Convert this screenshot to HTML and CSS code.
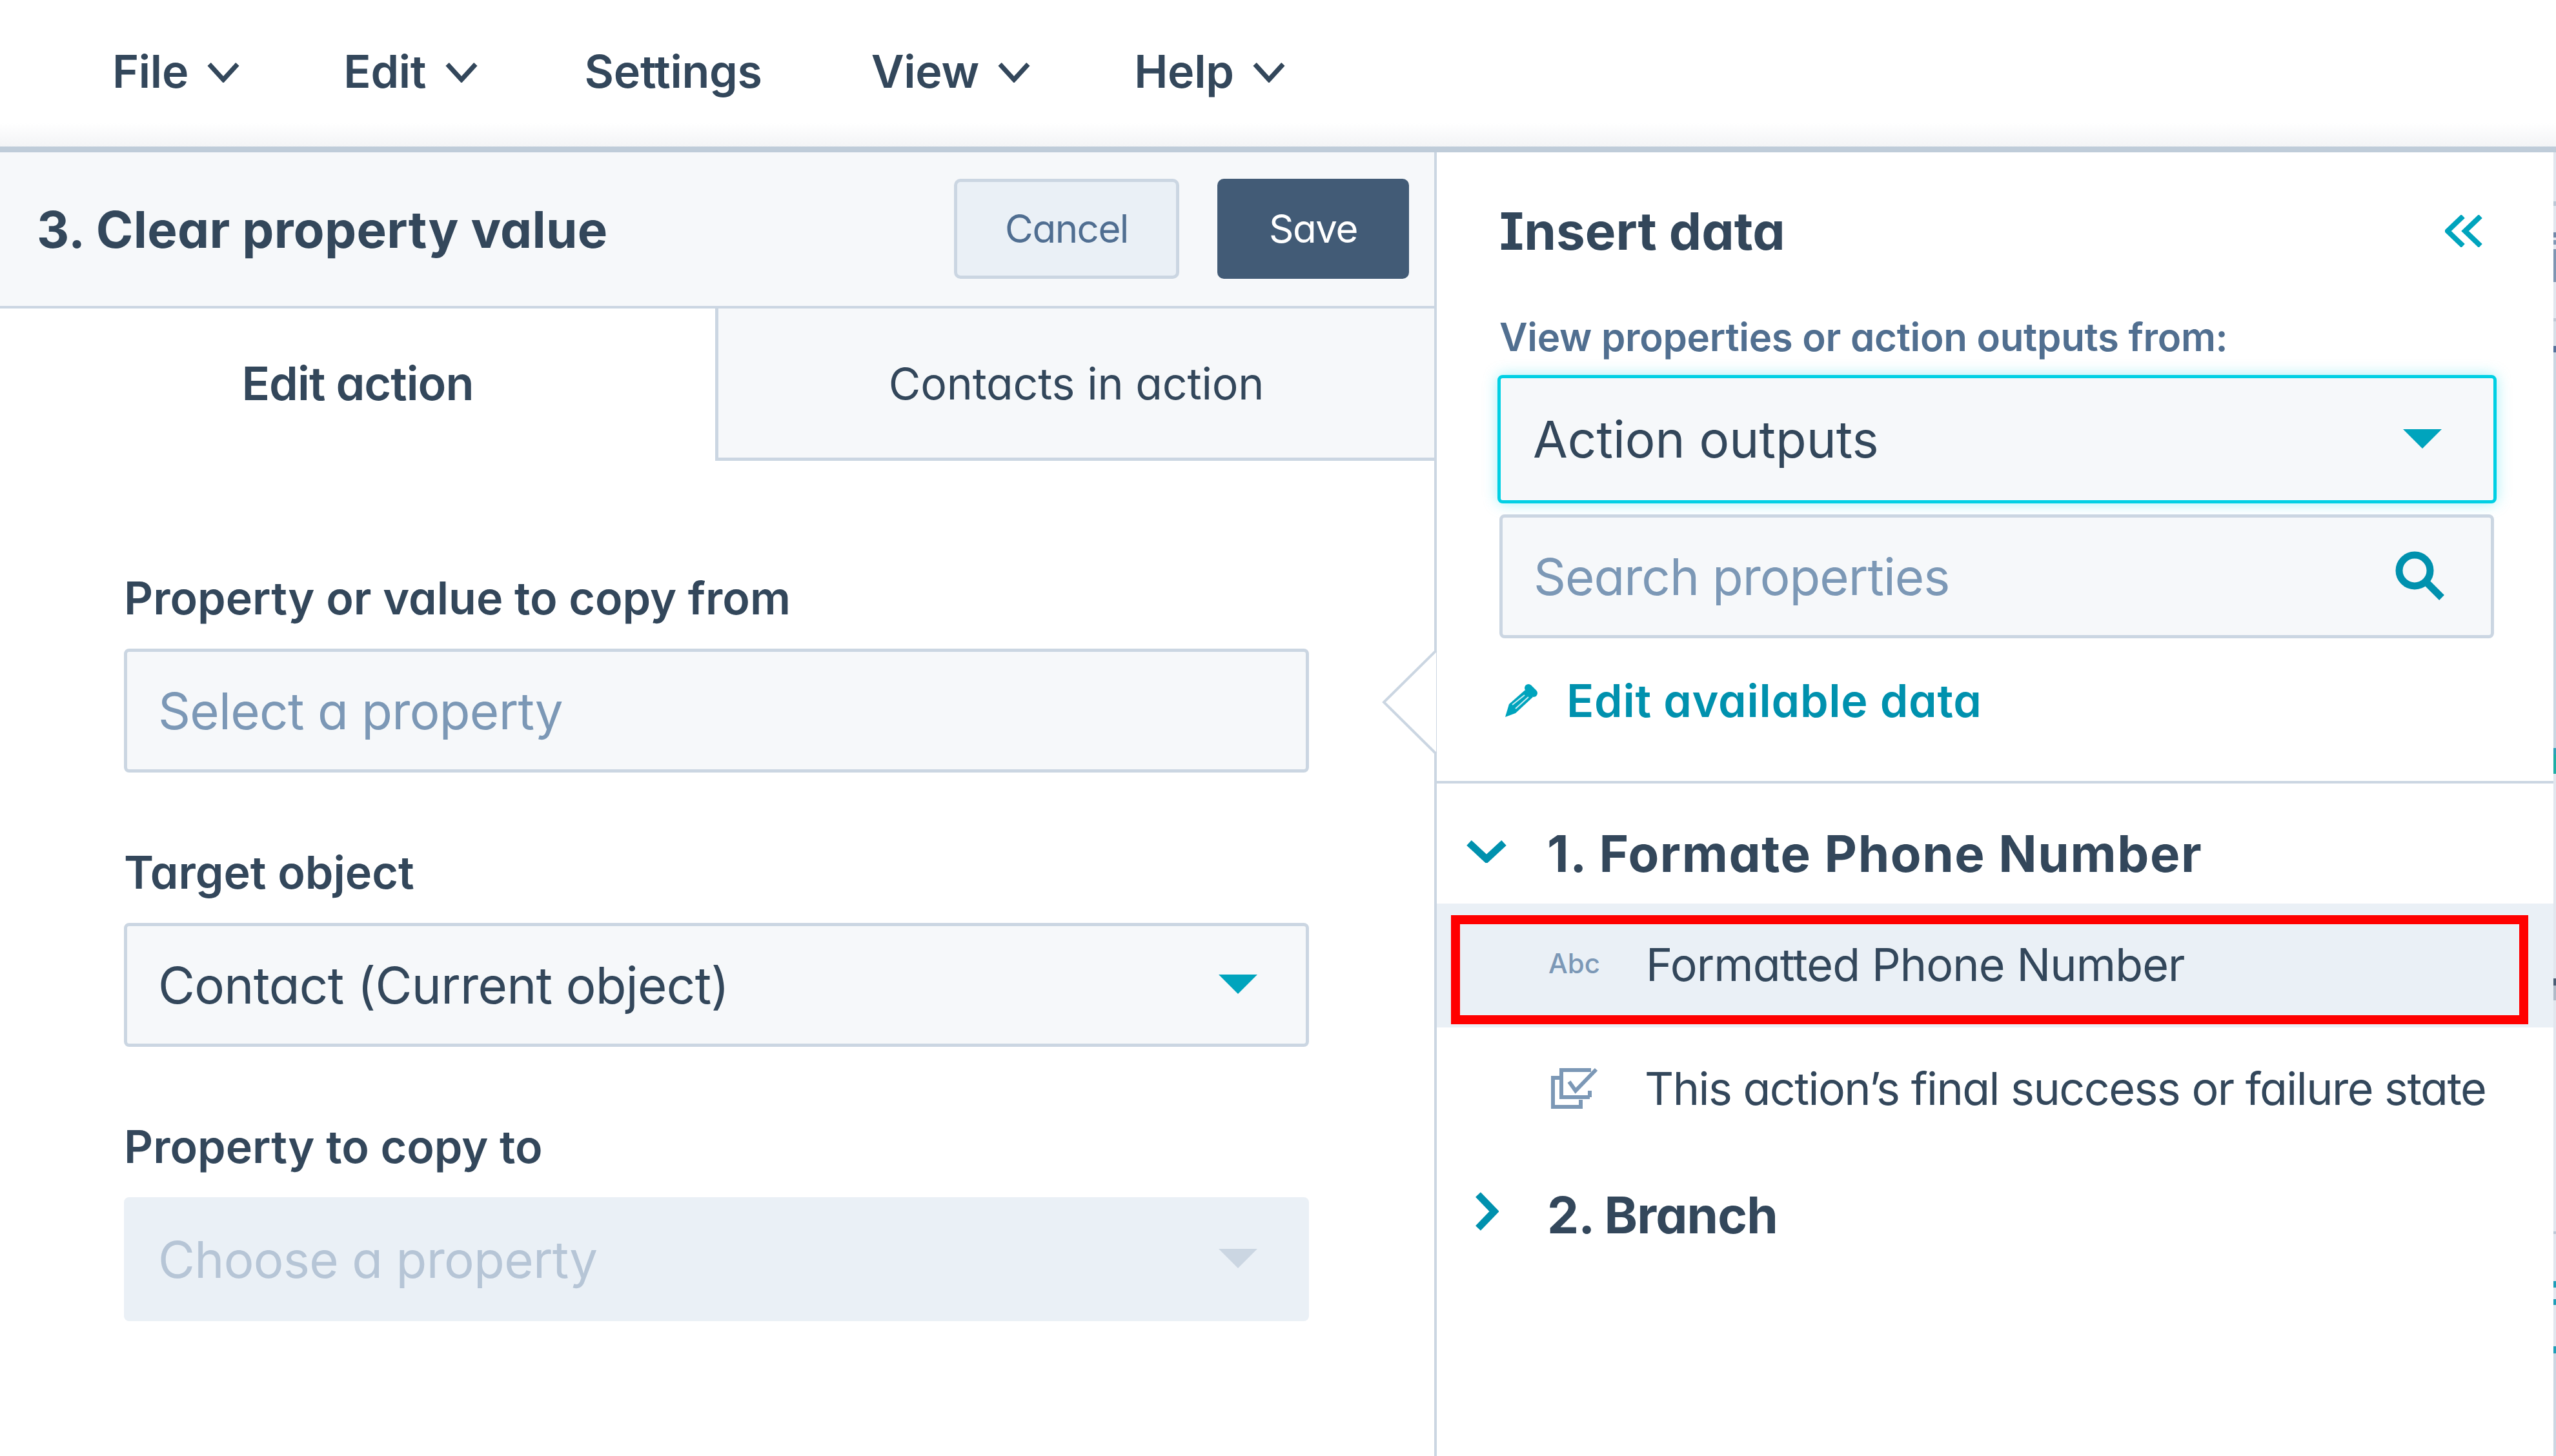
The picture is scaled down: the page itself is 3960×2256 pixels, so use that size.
FILE: index.html
```html
<!DOCTYPE html>
<html lang="en">
<head>
    <meta charset="UTF-8">
    <title>Clear property value</title>
    <link rel="stylesheet" href="styles.css">
</head>
<body>
    <nav class="menubar">
        <span class="menu-item">File <svg class="menu-caret" viewBox="0 0 48 30"><path d="M3 3 L24 26 L45 3"/></svg></span>
        <span class="menu-item">Edit <svg class="menu-caret" viewBox="0 0 48 30"><path d="M3 3 L24 26 L45 3"/></svg></span>
        <span class="menu-item menu-plain">Settings</span>
        <span class="menu-item">View <svg class="menu-caret" viewBox="0 0 48 30"><path d="M3 3 L24 26 L45 3"/></svg></span>
        <span class="menu-item">Help <svg class="menu-caret" viewBox="0 0 48 30"><path d="M3 3 L24 26 L45 3"/></svg></span>
    </nav>

    <main class="main">
        <section class="left">
            <header class="left-head">
                <h1 class="title">3. Clear property value</h1>
                <button class="btn btn-cancel">Cancel</button>
                <button class="btn btn-save">Save</button>
            </header>
            <div class="tabs">
                <div class="tab tab-active">Edit action</div>
                <div class="tab">Contacts in action</div>
            </div>
            <form class="form">
                <label class="field-label">Property or value to copy from</label>
                <div class="field"><span class="placeholder">Select a property</span></div>
                <label class="field-label">Target object</label>
                <div class="field"><span>Contact (Current object)</span><i class="arrow"></i></div>
                <label class="field-label">Property to copy to</label>
                <div class="field field-disabled"><span>Choose a property</span><i class="arrow"></i></div>
            </form>
        </section>

        <aside class="right">
            <svg class="notch" viewBox="0 0 84 164"><path d="M84 2 L3 82 L84 162"/></svg>
            <div class="insert">
                <div class="insert-head">
                    <h2 class="insert-title">Insert data</h2>
                    <svg class="collapse" viewBox="0 0 58 50"><path d="M28 2 L4 25 L28 48 M55 2 L31 25 L55 48"/></svg>
                </div>
                <div class="insert-label">View properties or action outputs from:</div>
                <div class="field field-focus"><span>Action outputs</span><i class="arrow"></i></div>
                <div class="field field-search">
                    <span class="placeholder">Search properties</span>
                    <svg class="search-icon" viewBox="0 0 78 78"><circle cx="30" cy="30" r="24"/><path d="M48 48 L72 72"/></svg>
                </div>
                <a class="edit-link">
                    <svg class="pencil" viewBox="0 0 54 52">
                        <path class="pencil-cap" d="M38 6 L46 14"/>
                        <path d="M33 9 L45 20 L18 45 L2 51 L8 31 Z"/>
                        <path class="pencil-line" d="M13 32 L32 17 M18 38 L38 20"/>
                    </svg>
                    Edit available data
                </a>
            </div>

            <div class="outputs">
                <div class="group group-first">
                    <svg class="chevron chevron-down" viewBox="0 0 64 36"><path d="M5 5 L32 30 L59 5"/></svg>
                    1. Formate Phone Number
                </div>
                <div class="row row-hover">
                    <span class="row-abc">Abc</span>
                    <span>Formatted Phone Number</span>
                    <div class="redbox"></div>
                </div>
                <div class="row row-state">
                    <svg class="row-check" viewBox="0 0 74 64">
                        <path d="M62 4 L16 4 L16 46 L60 46 M60 36 L60 46"/>
                        <path d="M16 16 L3 16 L3 61 L46 61 L46 50"/>
                        <path d="M28 22 L38 36 L70 3"/>
                    </svg>
                    <span>This action’s final success or failure state</span>
                </div>
                <div class="group group-last">
                    <svg class="chevron chevron-right" viewBox="0 0 38 62"><path d="M6 5 L31 31 L6 57"/></svg>
                    2. Branch
                </div>
            </div>
        </aside>
        <div class="edge"></div>
    </main>
</body>
</html>
```
FILE: styles.css
```css
* {
  box-sizing: border-box;
}

html, body {
  margin: 0;
  width: 3960px;
  height: 2256px;
  overflow: hidden;
}

body {
  background: white;
  color: #33475b;
  font-family: Inter, "Noto Sans", sans-serif;
  font-feature-settings: "cv11";
}

/* top menu */
.menubar {
  height: 236px;
  display: flex;
  align-items: flex-start;
  padding: 72px 0 0 174px;
  gap: 161px;
  border-bottom: 9px solid #bfccd9;
  background: linear-gradient(to bottom, white 190px, #f3f4f6 227px);
}

.menu-item {
  font-size: 70px;
  font-weight: 600;
  letter-spacing: -0.3px;
  line-height: 78px;
  white-space: nowrap;
}

.menu-plain {
  margin: 0 8px 0 5px;
}

.menu-caret {
  width: 50px;
  height: 32px;
  margin-left: 12px;
  vertical-align: 8px;
}

.menu-caret path {
  fill: none;
  stroke: #33475b;
  stroke-width: 7;
}

.main {
  display: flex;
  height: 2020px;
  position: relative;
}

/* left side */
.left {
  width: 2226px;
  border-right: 4px solid #cbd6e2;
}

.left-head {
  height: 242px;
  background: #f6f8fa;
  border-bottom: 4px solid #cbd6e2;
  display: flex;
  align-items: center;
  padding: 0 39px 0 57px;
}

.title {
  margin: 0 auto 0 0;
  font-size: 78px;
  font-weight: 700;
  letter-spacing: 0.3px;
}

.btn {
  height: 155px;
  border-radius: 10px;
  font-family: inherit;
  font-feature-settings: inherit;
  font-size: 60px;
  font-weight: 400;
  letter-spacing: -1.5px;
  margin-top: -2px;
}

.btn-cancel {
  width: 349px;
  margin-right: 59px;
  background: #eaf0f6;
  border: 5px solid #cbd6e2;
  color: #506e91;
}

.btn-save {
  width: 297px;
  background: #425b76;
  border: none;
  color: white;
}

.tabs {
  display: flex;
  height: 236px;
}

.tab {
  flex: 1;
  display: flex;
  align-items: center;
  justify-content: center;
  background: #f6f8fa;
  border-bottom: 5px solid #cbd6e2;
  font-size: 68px;
  letter-spacing: -0.2px;
}

.tab-active {
  flex: none;
  width: 1113px;
  background: white;
  border-bottom: none;
  border-right: 5px solid #cbd6e2;
  padding-bottom: 6px;
  font-size: 72px;
  font-weight: 600;
  letter-spacing: -1px;
}

.form {
  padding: 168px 194px 0 192px;
}

.field-label {
  display: block;
  font-size: 70px;
  font-weight: 600;
  line-height: 90px;
  margin-bottom: 33px;
}

.field {
  height: 192px;
  background: #f6f8fa;
  border: 5px solid #cbd6e2;
  border-radius: 8px;
  display: flex;
  align-items: center;
  justify-content: space-between;
  padding: 0 48px;
  font-size: 78px;
  letter-spacing: -0.7px;
  margin-bottom: 110px;
}

.placeholder {
  color: #7c98b6;
}

.arrow {
  width: 0;
  height: 0;
  border-left: 30px solid transparent;
  border-right: 30px solid transparent;
  border-top: 30px solid #00a4bd;
  margin-right: 27px;
  margin-top: -2px;
}

.field-disabled {
  background: #eaf0f6;
  border-color: #eaf0f6;
  color: #b6c5d6;
}

.field-disabled .arrow {
  border-top-color: #cbd6e2;
}

/* right side */
.right {
  flex: 1;
  position: relative;
}

.notch {
  position: absolute;
  left: -85px;
  top: 770px;
  width: 84px;
  height: 164px;
  overflow: visible;
}

.notch path {
  fill: white;
  stroke: #cbd6e2;
  stroke-width: 4;
}

.insert {
  height: 978px;
  padding: 0 96px 0 97px;
  border-bottom: 4px solid #cbd6e2;
}

.insert-head {
  height: 246px;
  padding-bottom: 3px;
  display: flex;
  align-items: center;
  justify-content: space-between;
}

.insert-title {
  margin: 0;
  font-size: 80px;
  font-weight: 700;
  font-feature-settings: "cv11", "cv08";
}

.collapse {
  width: 58px;
  height: 50px;
  margin-right: 18px;
}

.collapse path {
  fill: none;
  stroke: #00a4bd;
  stroke-width: 8;
}

.insert-label {
  font-size: 60px;
  font-weight: 600;
  color: #516f90;
  letter-spacing: -0.3px;
  line-height: 80px;
  margin-bottom: 19px;
}

.field-focus {
  height: 199px;
  margin: 0 -4px 17px -3px;
  border-color: #00d0e4;
  box-shadow: 0 0 22px rgba(0, 208, 228, 0.35);
  padding-left: 50px;
  letter-spacing: 0;
}

.field-focus .arrow {
  margin-right: 32px;
}

.field-search {
  margin-bottom: 0;
  padding-right: 70px;
  letter-spacing: -1px;
}

.search-icon {
  width: 78px;
  height: 78px;
}

.search-icon circle, .search-icon path {
  fill: none;
  stroke: #0091ae;
  stroke-width: 11;
}

.edit-link {
  display: flex;
  align-items: center;
  gap: 43px;
  margin-top: 52px;
  padding-left: 7px;
  color: #0091ae;
  font-size: 70px;
  font-weight: 600;
  letter-spacing: 0.7px;
  line-height: 90px;
}

.pencil {
  width: 54px;
  height: 52px;
}

.pencil path {
  fill: #00a4bd;
}

.pencil .pencil-cap {
  fill: none;
  stroke: #00a4bd;
  stroke-width: 12;
  stroke-linecap: round;
}

.pencil .pencil-line {
  fill: none;
  stroke: white;
  stroke-width: 2;
  opacity: 0.8;
}

.group {
  height: 186px;
  display: flex;
  align-items: center;
  font-size: 78px;
  font-weight: 700;
  padding-left: 171px;
  position: relative;
}

.group-first {
  padding-top: 30px;
  letter-spacing: 1.55px;
}

.chevron {
  position: absolute;
}

.chevron path {
  fill: none;
  stroke: #0091ae;
  stroke-width: 11;
}

.chevron-down {
  left: 45px;
  top: 87px;
  width: 64px;
  height: 36px;
}

.chevron-right {
  left: 58px;
  top: 62px;
  width: 38px;
  height: 62px;
}

.row {
  height: 192px;
  display: flex;
  align-items: center;
  padding: 0 0 4px 173px;
  font-size: 70px;
  letter-spacing: -0.9px;
  position: relative;
}

.row-state {
  letter-spacing: -1.55px;
}

.row-hover {
  background: #eaf0f6;
}

.redbox {
  position: absolute;
  left: 22px;
  top: 18px;
  width: 1669px;
  height: 169px;
  border: 14px solid #ff0000;
}

.row-abc {
  width: 151px;
  font-size: 42px;
  color: #7c98b6;
  font-weight: 500;
  letter-spacing: 0;
  margin-top: -4px;
}

.row-check {
  width: 74px;
  height: 64px;
  margin-right: 71px;
  margin-left: 4px;
}

.row-check path {
  fill: none;
  stroke: #7c98b6;
  stroke-width: 6;
}

.group-last {
  height: 196px;
  letter-spacing: -0.9px;
}

/* sliver of the next window along the right side */
.edge {
  position: absolute;
  right: 0;
  top: 0;
  width: 4px;
  height: 100%;
  background: linear-gradient(to bottom,
    #e2e6ee 0 76px, #bcc8d6 76px 83px, #e2e6ee 83px 124px,
    #7088a8 124px 132px, #e2e6ee 132px 136px, #8098b5 136px 143px,
    #e2e6ee 143px 150px, #7f95b2 150px 201px, #e2e6ee 201px 257px,
    #c0c9d6 257px 262px, #d8dfe8 262px 300px, #54709a 300px 310px,
    #cbd6e2 310px 923px, #2f9fb8 923px 933px, #1fada5 933px 963px,
    #e2e6ee 963px 1280px, #4a5d75 1280px 1291px, #b0bac8 1291px 1314px,
    #e2e6ee 1314px 1672px, #bcc8d6 1672px 1676px, #e2e6ee 1676px 1749px,
    #1f9db8 1749px 1759px, #e2e6ee 1759px 1777px, #1f9db8 1777px 1786px,
    #e2e6ee 1786px 1850px, #1f9db8 1850px 1861px, #ccd6e2 1861px);
}
```
